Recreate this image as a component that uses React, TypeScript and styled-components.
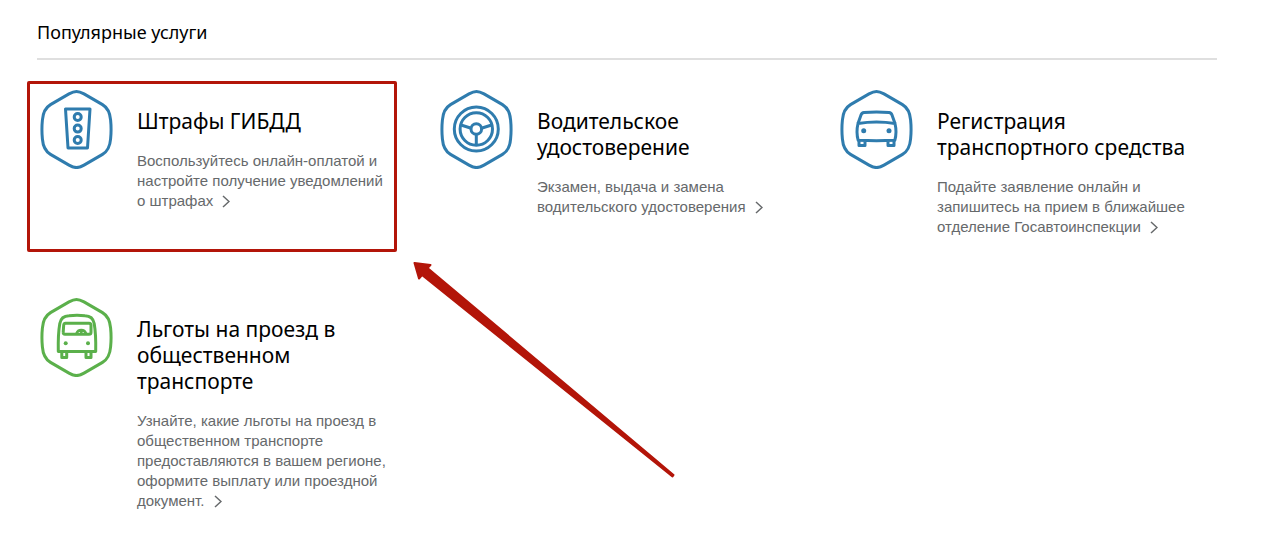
import React from "react";
import styled, { createGlobalStyle } from "styled-components";

const GlobalStyle = createGlobalStyle`
  *, *::before, *::after { box-sizing: border-box; }
  body {
    margin: 0;
    background: #fff;
    color: #000;
    font-family: "Liberation Sans", Arial, sans-serif;
  }
`;

const BLUE = "#2f7cae";
const GREEN = "#5bb04b";
const RED = "#b31509";

const Page = styled.main`
  padding: 20px 49px 32px 37px;
`;

const SectionTitle = styled.h2`
  margin: 0;
  padding-bottom: 14px;
  border-bottom: 2px solid #dfdfdf;
  font-family: "Noto Sans", sans-serif;
  font-size: 18px;
  line-height: 24px;
  font-weight: 400;
`;

const Grid = styled.ul`
  display: grid;
  grid-template-columns: repeat(3, minmax(0, 1fr));
  column-gap: 20px;
  row-gap: 60px;
  margin: 0;
  padding: 29px 0 0;
  list-style: none;
`;

const Cell = styled.li`
  position: relative;
`;

const Card = styled.a`
  display: grid;
  grid-template-columns: 80px minmax(0, 250px);
  column-gap: 20px;
  align-items: start;
  color: inherit;
  text-decoration: none;
`;

const Icon = styled.svg<{ $color: string }>`
  display: block;
  width: 80px;
  height: 80px;
  fill: none;
  stroke: ${(p) => p.$color};
  stroke-width: 3;
  stroke-linejoin: round;
`;

const Copy = styled.div`
  padding-top: 19px;
`;

const CardTitle = styled.h3`
  margin: 0 0 17px;
  font-family: "Noto Sans", sans-serif;
  font-size: 21px;
  line-height: 26px;
  font-weight: 400;
`;

const Description = styled.p`
  margin: 0;
  color: #66696b;
  font-size: 15px;
  line-height: 20px;
`;

const Chevron = styled.svg`
  width: 8px;
  height: 13px;
  margin-left: 5px;
  vertical-align: -2px;
  fill: none;
  stroke: #66696b;
  stroke-width: 1.5;
`;

const Highlight = styled.div`
  position: absolute;
  inset: -8px 20px -15px -10px;
  border: 3px solid ${RED};
  border-radius: 2px;
  pointer-events: none;
`;

const Pointer = styled.svg`
  position: absolute;
  left: 376px;
  top: 172px;
  width: 262px;
  height: 217px;
  fill: ${RED};
  stroke: ${RED};
  stroke-width: 2;
  stroke-linejoin: round;
  pointer-events: none;
`;

const Hexagon = () => (
  <path d="M39.5 2.4C37 2.4 35 3.2 32 4.9L13.5 15.6C7.8 19 6 23.5 5.4 31C4.8 37 4.8 44 5.4 50C6 57.5 7.8 62 13.5 65.4L32 76.1C35 77.8 37 78.6 39.5 78.6C42 78.6 44 77.8 47 76.1L65.5 65.4C71.2 62 73 57.5 73.6 50C74.2 44 74.2 37 73.6 31C73 23.5 71.2 19 65.5 15.6L47 4.9C44 3.2 42 2.4 39.5 2.4Z" />
);

const TrafficLight = () => (
  <g>
    <path d="M28.5 20H53L50.5 59H31Z" />
    <circle cx="40.7" cy="28" r="3.5" />
    <circle cx="40.7" cy="39.6" r="3.5" />
    <circle cx="40.7" cy="51" r="3.5" />
  </g>
);

const Wheel = () => (
  <g>
    <circle cx="39.3" cy="40" r="22" />
    <circle cx="39.3" cy="40" r="16.2" />
    <circle cx="39.3" cy="40" r="5.3" />
    <path d="M39.3 45.5V56M24 36L34.2 39.2M54.6 36L44.4 39.2" />
  </g>
);

const Car = ({ color }: { color: string }) => (
  <g>
    <path d="M21 34.5L24 26C24.6 24.3 25.5 23.7 27 23.6Q39.5 22.5 52 23.6C53.5 23.7 54.4 24.3 55 26L58 34.5" />
    <path d="M21 34.5Q39.5 31.5 58 34.5C59.3 40 59.3 46 57.8 51.3Q39.5 52.2 21.2 51.3C19.7 46 19.7 40 21 34.5Z" />
    <path d="M22 51.5V56.5H28V52.5M51 52.5V56.5H57V51.5" />
    <circle cx="26.7" cy="41.7" r="2.5" fill={color} stroke="none" />
    <circle cx="52" cy="41.7" r="2.5" fill={color} stroke="none" />
  </g>
);

const Bus = ({ color }: { color: string }) => (
  <g>
    <path d="M21.3 54.5C21.1 45 21.3 35 22.8 26.5C23.8 21 27 18.8 32 18.7Q40 18 48 18.7C53 18.8 56.2 21 57.2 26.5C58.7 35 58.9 45 58.7 54.5Z" />
    <path d="M28.5 26.2H52Q54 26.2 54 28.2V35.2Q54 37.2 52 37.2H28Q26 37.2 26.2 35.2L26.7 28Q27 26.2 28.5 26.2Z" />
    <path d="M39.5 36.5A5 5 0 0 1 49 36.5M44.3 34V37" strokeWidth="2.5" />
    <path d="M24.8 54.5V60.5H29.7V54.5M49 54.5V60.5H54V54.5" />
    <circle cx="28.7" cy="46.3" r="2" fill={color} stroke="none" />
    <circle cx="51" cy="46.3" r="2" fill={color} stroke="none" />
  </g>
);

type Service = {
  title: string;
  text: string;
  color: string;
  Glyph: React.ComponentType<{ color: string }>;
  highlighted?: boolean;
};

const services: Service[] = [
  {
    title: "Штрафы ГИБДД",
    text: "Воспользуйтесь онлайн-оплатой и настройте получение уведомлений о штрафах",
    color: BLUE,
    Glyph: TrafficLight,
    highlighted: true,
  },
  {
    title: "Водительское удостоверение",
    text: "Экзамен, выдача и замена водительского удостоверения",
    color: BLUE,
    Glyph: Wheel,
  },
  {
    title: "Регистрация транспортного средства",
    text: "Подайте заявление онлайн и запишитесь на прием в ближайшее отделение Госавтоинспекции",
    color: BLUE,
    Glyph: Car,
  },
  {
    title: "Льготы на проезд в общественном транспорте",
    text: "Узнайте, какие льготы на проезд в общественном транспорте предоставляются в вашем регионе, оформите выплату или проездной документ.",
    color: GREEN,
    Glyph: Bus,
  },
];

export default function App() {
  return (
    <>
      <GlobalStyle />
      <Page>
        <SectionTitle>Популярные услуги</SectionTitle>
        <Grid>
          {services.map(({ title, text, color, Glyph, highlighted }) => (
            <Cell key={title}>
              <Card href="#">
                <Icon $color={color} viewBox="0 0 80 80" aria-hidden="true">
                  <Hexagon />
                  <Glyph color={color} />
                </Icon>
                <Copy>
                  <CardTitle>{title}</CardTitle>
                  <Description>
                    {`${text}\u00a0`}
                    <Chevron viewBox="0 0 8 13" aria-hidden="true">
                      <path d="M1 1L7 6.5L1 12" />
                    </Chevron>
                  </Description>
                </Copy>
              </Card>
              {highlighted && (
                <>
                  <Highlight />
                  <Pointer viewBox="0 0 262 217" aria-hidden="true">
                    <path d="M1.5 2L17.5 4L14.5 7L260.5 214L259.5 215.5L9 14L6 17.5Z" />
                  </Pointer>
                </>
              )}
            </Cell>
          ))}
        </Grid>
      </Page>
    </>
  );
}
